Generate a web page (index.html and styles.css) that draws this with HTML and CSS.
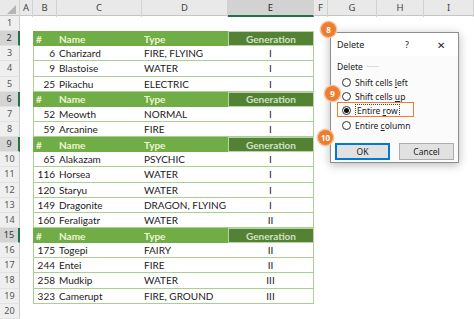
FILE: index.html
```html
<!DOCTYPE html>
<html lang="en">
  <head>
    <meta charset="UTF-8">
    <title>Delete rows</title>
    <link rel="stylesheet" href="styles.css">
  </head>
  <body>

    <div class="sheet">
      <div class="row cols">
        <div class="corner"></div><div>A</div><div>B</div><div>C</div><div>D</div><div class="sel">E</div><div>F</div><div>G</div><div>H</div><div>I</div>
      </div>

      <div class="row"><div class="rh">1</div></div>
      <div class="row hdr"><div class="rh sel">2</div><div></div><div class="d b">#</div><div class="d">Name</div><div class="d">Type</div><div class="d e">Generation</div></div>
      <div class="row"><div class="rh">3</div><div></div><div class="d b">6</div><div class="d">Charizard</div><div class="d">FIRE, FLYING</div><div class="d e">I</div></div>
      <div class="row"><div class="rh">4</div><div></div><div class="d b">9</div><div class="d">Blastoise</div><div class="d">WATER</div><div class="d e">I</div></div>
      <div class="row"><div class="rh">5</div><div></div><div class="d b">25</div><div class="d">Pikachu</div><div class="d">ELECTRIC</div><div class="d e">I</div></div>
      <div class="row hdr"><div class="rh sel">6</div><div></div><div class="d b">#</div><div class="d">Name</div><div class="d">Type</div><div class="d e">Generation</div></div>
      <div class="row"><div class="rh">7</div><div></div><div class="d b">52</div><div class="d">Meowth</div><div class="d">NORMAL</div><div class="d e">I</div></div>
      <div class="row"><div class="rh">8</div><div></div><div class="d b">59</div><div class="d">Arcanine</div><div class="d">FIRE</div><div class="d e">I</div></div>
      <div class="row hdr"><div class="rh sel">9</div><div></div><div class="d b">#</div><div class="d">Name</div><div class="d">Type</div><div class="d e">Generation</div></div>
      <div class="row"><div class="rh">10</div><div></div><div class="d b">65</div><div class="d">Alakazam</div><div class="d">PSYCHIC</div><div class="d e">I</div></div>
      <div class="row"><div class="rh">11</div><div></div><div class="d b">116</div><div class="d">Horsea</div><div class="d">WATER</div><div class="d e">I</div></div>
      <div class="row"><div class="rh">12</div><div></div><div class="d b">120</div><div class="d">Staryu</div><div class="d">WATER</div><div class="d e">I</div></div>
      <div class="row"><div class="rh">13</div><div></div><div class="d b">149</div><div class="d">Dragonite</div><div class="d">DRAGON, FLYING</div><div class="d e">I</div></div>
      <div class="row"><div class="rh">14</div><div></div><div class="d b">160</div><div class="d">Feraligatr</div><div class="d">WATER</div><div class="d e">II</div></div>
      <div class="row hdr"><div class="rh sel">15</div><div></div><div class="d b">#</div><div class="d">Name</div><div class="d">Type</div><div class="d e">Generation</div></div>
      <div class="row"><div class="rh">16</div><div></div><div class="d b">175</div><div class="d">Togepi</div><div class="d">FAIRY</div><div class="d e">II</div></div>
      <div class="row"><div class="rh">17</div><div></div><div class="d b">244</div><div class="d">Entei</div><div class="d">FIRE</div><div class="d e">II</div></div>
      <div class="row"><div class="rh">18</div><div></div><div class="d b">258</div><div class="d">Mudkip</div><div class="d">WATER</div><div class="d e">III</div></div>
      <div class="row"><div class="rh">19</div><div></div><div class="d b">323</div><div class="d">Camerupt</div><div class="d">FIRE, GROUND</div><div class="d e">III</div></div>
      <div class="row"><div class="rh">20</div></div>

      <div class="dialog">
        <div class="title">
          <span class="grow">Delete</span>
          <span class="help">?</span>
          <span class="close">&#x2715;</span>
        </div>
        <div class="body">
          <div class="legend"><span>Delete</span><i></i></div>
          <div class="opts">
            <div class="opt"><b class="radio"></b><span>Shift cells <u>l</u>eft</span></div>
            <div class="opt"><b class="radio"></b><span>Shift cells <u>u</u>p</span></div>
            <div class="opt"><b class="radio on"></b><span class="focus">Entire <u>r</u>ow</span></div>
            <div class="opt"><b class="radio"></b><span>Entire <u>c</u>olumn</span></div>
          </div>
          <div class="btns">
            <div class="btn def">OK</div>
            <div class="btn">Cancel</div>
          </div>
        </div>
        <div class="mark"></div>
      </div>

      <div class="badge b8">8</div>
      <div class="badge b9">9</div>
      <div class="badge b10">10</div>
    </div>

  </body>
</html>
```

FILE: styles.css
```css
* {
  box-sizing: border-box;
  margin: 0;
  padding: 0;
}

body {
  width: 474px;
  height: 319px;
  overflow: hidden;
  background: #fff;
  font-family: Lato, sans-serif;
  color: #1a1a1a;
}

.sheet {
  position: relative;
}

.row {
  display: grid;
  grid-template-columns: 20px 13px 24px 85px 86px 86px 14px 49px 47px 50px;
  height: 15.15px;
  font-size: 10px;
}

/* column letters */
.cols {
  height: 16px;
  background: #e9e9e9;
  border-bottom: 1px solid #c6c6c6;
  font-family: "Noto Sans", sans-serif;
  font-size: 9.5px;
  color: #444;
}

.cols > div {
  border-right: 1px solid #d2d2d2;
  text-align: center;
  line-height: 15px;
}

.cols .sel {
  background: #d2d2d2;
  border-bottom: 2px solid #217346;
  color: #262626;
}

.corner {
  position: relative;
}

.corner::after {
  content: "";
  position: absolute;
  right: 3px;
  bottom: 3px;
  border-style: solid;
  border-width: 0 0 9px 9px;
  border-color: transparent transparent #b5b5b5 transparent;
}

/* row numbers */
.rh {
  background: #efefef;
  border-right: 1px solid #cdcdcd;
  border-bottom: 1px solid #e2e2e2;
  text-align: center;
  font-family: "Noto Sans", sans-serif;
  font-size: 9px;
  line-height: 14px;
  color: #555;
}

.rh.sel {
  background: #d4d4d4;
  border-right: 2px solid #217346;
  color: #333;
}

/* table cells */
.d {
  display: flex;
  align-items: center;
  padding: 0 2px;
  white-space: nowrap;
  border-bottom: 1px solid #a9d08e;
}

.b {
  border-left: 1px solid #a9d08e;
  justify-content: flex-end;
}

.e {
  border-right: 1px solid #a9d08e;
  justify-content: center;
}

.hdr .d {
  background: #70ad47;
  color: #eef4d4;
  font-weight: bold;
  border-bottom: none;
}

.hdr .b {
  justify-content: flex-start;
  border-left-color: #70ad47;
}

.hdr .e {
  background: #548235;
  color: #cfe1c1;
  border: 1px solid #b9d4a8;
}

/* Delete dialog */
.dialog {
  position: absolute;
  left: 330px;
  top: 32px;
  width: 129px;
  height: 131px;
  background: #fbfbfb;
  border: 1px solid #8e8e8e;
  box-shadow: 0 2px 9px rgba(0, 0, 0, 0.28);
  font-family: "Noto Sans", sans-serif;
  font-size: 8.5px;
  color: #222;
  display: flex;
  flex-direction: column;
}

.title {
  height: 23px;
  display: flex;
  align-items: center;
  padding: 0 13px 0 6px;
  background: #fff;
  font-size: 9px;
}

.grow {
  flex: 1;
}

.help {
  margin-right: 28px;
}

.close {
  font-size: 10px;
}

.body {
  padding: 4px 4px 0 6px;
}

.legend {
  display: flex;
  align-items: center;
  height: 12px;
  gap: 4px;
}

.legend i {
  width: 12px;
  border-top: 1px solid #dcdcdc;
}

.opts {
  margin: 3px 0 0 5px;
}

.opt {
  display: flex;
  align-items: center;
  height: 14.3px;
  gap: 4px;
}

.radio {
  width: 9px;
  height: 9px;
  border: 1px solid #333;
  border-radius: 50%;
  background: #fff;
  display: flex;
  align-items: center;
  justify-content: center;
}

.radio.on::after {
  content: "";
  width: 5px;
  height: 5px;
  border-radius: 50%;
  background: #111;
}

.focus {
  border: 1px dotted #444;
  padding: 0 1px;
  line-height: 11px;
}

.btns {
  display: flex;
  justify-content: space-between;
  margin: 11px 0 0 -2px;
}

.btn {
  width: 55px;
  height: 17px;
  background: #e1e1e1;
  border: 1px solid #adadad;
  text-align: center;
  line-height: 15px;
}

.btn.def {
  border: 2px solid #0078d7;
  line-height: 13px;
}

.mark {
  position: absolute;
  left: 6px;
  top: 69px;
  width: 77px;
  height: 15px;
  border: 1.5px solid #ed7d31;
}

/* step badges */
.badge {
  position: absolute;
  width: 15px;
  height: 15px;
  border-radius: 50%;
  background: #ed7d31;
  box-shadow: 0 0 0 1.5px #f6c7a6;
  color: #fff;
  font-family: "Noto Sans", sans-serif;
  font-size: 8px;
  font-weight: bold;
  display: flex;
  align-items: center;
  justify-content: center;
}

.b8 {
  left: 321px;
  top: 22px;
}

.b9 {
  left: 325px;
  top: 86px;
}

.b10 {
  left: 318px;
  top: 130px;
}
```
